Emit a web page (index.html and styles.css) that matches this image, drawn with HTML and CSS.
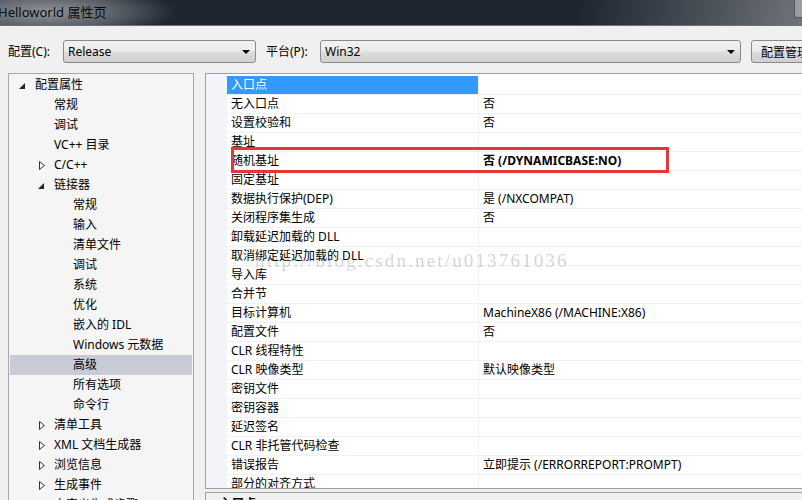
FILE: index.html
```html
<!DOCTYPE html>
<html lang="zh-CN">
<head>
  <meta charset="UTF-8" />
  <title>Helloworld 属性页</title>
  <link rel="stylesheet" href="styles.css">
</head>
<body>

  <!-- Title bar -->
  <div class="titlebar">
    <span class="title">Helloworld 属性页</span>
    <span class="close-edge"></span>
  </div>

  <!-- Konfigurasi / platform -->
  <div class="toolbar">
    <label class="lbl">配置(C):</label>
    <div class="combo combo-config"><span>Release</span><i class="drop"></i></div>
    <label class="lbl lbl-plat">平台(P):</label>
    <div class="combo combo-plat"><span>Win32</span><i class="drop"></i></div>
    <button class="btn">配置管理器(O)...</button>
  </div>

  <div class="main">
    <!-- Tree -->
    <ul class="tree">
      <li class="l0"><i class="tw open"></i>配置属性</li>
      <li class="l1">常规</li>
      <li class="l1">调试</li>
      <li class="l1">VC++ 目录</li>
      <li class="l1"><svg class="tw closed" viewBox="0 0 6 9"><path d="M.5 .5v8l5-4z"/></svg>C/C++</li>
      <li class="l1"><i class="tw open"></i>链接器</li>
      <li class="l2">常规</li>
      <li class="l2">输入</li>
      <li class="l2">清单文件</li>
      <li class="l2">调试</li>
      <li class="l2">系统</li>
      <li class="l2">优化</li>
      <li class="l2">嵌入的 IDL</li>
      <li class="l2">Windows 元数据</li>
      <li class="l2 sel">高级</li>
      <li class="l2">所有选项</li>
      <li class="l2">命令行</li>
      <li class="l1"><svg class="tw closed" viewBox="0 0 6 9"><path d="M.5 .5v8l5-4z"/></svg>清单工具</li>
      <li class="l1"><svg class="tw closed" viewBox="0 0 6 9"><path d="M.5 .5v8l5-4z"/></svg>XML 文档生成器</li>
      <li class="l1"><svg class="tw closed" viewBox="0 0 6 9"><path d="M.5 .5v8l5-4z"/></svg>浏览信息</li>
      <li class="l1"><svg class="tw closed" viewBox="0 0 6 9"><path d="M.5 .5v8l5-4z"/></svg>生成事件</li>
      <li class="l1"><svg class="tw closed" viewBox="0 0 6 9"><path d="M.5 .5v8l5-4z"/></svg>自定义生成步骤</li>
    </ul>

    <div class="right">
      <!-- Property grid -->
      <div class="grid">
        <div class="row active"><div class="name">入口点</div><div class="val"></div></div>
        <div class="row"><div class="name">无入口点</div><div class="val">否</div></div>
        <div class="row"><div class="name">设置校验和</div><div class="val">否</div></div>
        <div class="row"><div class="name">基址</div><div class="val"></div></div>
        <div class="row"><div class="name">随机基址</div><div class="val bold">否 (/DYNAMICBASE:NO)</div></div>
        <div class="row"><div class="name">固定基址</div><div class="val"></div></div>
        <div class="row"><div class="name">数据执行保护(DEP)</div><div class="val">是 (/NXCOMPAT)</div></div>
        <div class="row"><div class="name">关闭程序集生成</div><div class="val">否</div></div>
        <div class="row"><div class="name">卸载延迟加载的 DLL</div><div class="val"></div></div>
        <div class="row"><div class="name">取消绑定延迟加载的 DLL</div><div class="val"></div></div>
        <div class="row"><div class="name">导入库</div><div class="val"></div></div>
        <div class="row"><div class="name">合并节</div><div class="val"></div></div>
        <div class="row"><div class="name">目标计算机</div><div class="val">MachineX86 (/MACHINE:X86)</div></div>
        <div class="row"><div class="name">配置文件</div><div class="val">否</div></div>
        <div class="row"><div class="name">CLR 线程特性</div><div class="val"></div></div>
        <div class="row"><div class="name">CLR 映像类型</div><div class="val">默认映像类型</div></div>
        <div class="row"><div class="name">密钥文件</div><div class="val"></div></div>
        <div class="row"><div class="name">密钥容器</div><div class="val"></div></div>
        <div class="row"><div class="name">延迟签名</div><div class="val"></div></div>
        <div class="row"><div class="name">CLR 非托管代码检查</div><div class="val"></div></div>
        <div class="row"><div class="name">错误报告</div><div class="val">立即提示 (/ERRORREPORT:PROMPT)</div></div>
        <div class="row"><div class="name">部分的对齐方式</div><div class="val"></div></div>

        <!-- overlay: red highlight + watermark -->
        <div class="mark"></div>
        <div class="watermark">http://blog.csdn.net/u013761036</div>
      </div>

      <!-- Description -->
      <div class="desc"><b>入口点</b></div>
    </div>
  </div>

</body>
</html>
```

FILE: styles.css
```css
/* ---------- Dasar ---------- */
html,body{margin:0;height:500px;overflow:hidden}
body{
  background:#f0f0f0;
  font-family:"Segoe UI","Noto Sans","Noto Sans CJK SC",sans-serif;
  font-size:12px;
  color:#000;
}

/* ---------- Title bar ---------- */
.titlebar{
  position:relative;
  height:25px;
  background:
    radial-gradient(ellipse 130px 28px at 45px 12px,rgba(150,154,160,.95),rgba(150,154,160,.5) 55%,rgba(31,38,48,0) 100%),
    linear-gradient(100deg,#1f2630 0%,#1f2630 72%,#4a5058 88%,#70747a 100%);
  border-bottom:1px solid #6e7278;
}
.title{
  position:absolute;left:-2px;top:3px;
  font-size:13px;line-height:18px;color:#0a0a0a;
}
.close-edge{
  position:absolute;right:-6px;top:-2px;
  width:12px;height:18px;
  border:1px solid #50555c;border-radius:3px;
  background:#9a9ea4;
}

/* ---------- Toolbar ---------- */
.toolbar{display:flex;align-items:center;height:23px;margin-top:14px;padding-left:8px;white-space:nowrap}
.toolbar > *{flex:none}
.lbl{width:55px;line-height:23px}
.lbl-plat{width:54px;margin-left:10px}
.combo{
  position:relative;box-sizing:border-box;height:23px;
  border:1px solid #8a8a8a;border-radius:3px;
  background:linear-gradient(#f2f2f2 0%,#ebebeb 48%,#dddddd 52%,#cfcfcf 100%);
  line-height:21px;padding-left:4px;
}
.combo-config{width:193px}
.combo-plat{width:421px}
.drop{
  position:absolute;right:5px;top:9px;
  width:0;height:0;
  border-left:4px solid transparent;border-right:4px solid transparent;border-top:4px solid #000;
}
.btn{
  margin-left:10px;height:23px;padding:0 9px;
  border:1px solid #8a8a8a;border-radius:3px;
  background:linear-gradient(#f2f2f2 0%,#ebebeb 48%,#dddddd 52%,#cfcfcf 100%);
  font:inherit;font-size:12px;text-align:left;
}

/* ---------- Layout ---------- */
.main{display:flex;margin-top:10px;gap:11px;padding-left:8px}

/* ---------- Tree ---------- */
.tree{
  list-style:none;margin:0;padding:1px 0 0;
  width:184px;height:440px;flex:none;
  background:#f5f5f5;border:1px solid #a7a7a7;border-bottom:0;
}
.tree li{position:relative;height:20px;line-height:20px;white-space:nowrap;margin:0 1px}
.l0{padding-left:25px}
.l1{padding-left:44px}
.l2{padding-left:63px}
.tree li.sel{background:#c9cbd7}
.tw{position:absolute;top:7px}
.l0 .tw{left:9px}
.l1 .tw{left:28px}
.tw.open{
  width:0;height:0;top:8px;
  border-left:6px solid transparent;border-bottom:6px solid #262626;
}
.tw.closed{
  width:6px;height:9px;top:6px;left:29px;
  fill:none;stroke:#333;stroke-width:1;
}

/* ---------- Property grid ---------- */
.right{flex:1;display:flex;flex-direction:column;min-width:0}
.grid{
  position:relative;
  height:412px;
  background:#fff;
  border:1px solid #a0a0a0;border-right:0;
  padding-top:2px;
  overflow:hidden;
}
.row{
  display:flex;height:18px;line-height:18px;
  border-bottom:1px solid #f0f1f4;
  margin-left:21px;white-space:nowrap;
}
.grid::before{
  content:"";position:absolute;left:0;top:0;bottom:0;width:21px;background:#f2f4f9;
}
.name{width:247px;padding-left:4px;border-right:1px solid #f0f1f4}
.val{padding-left:4px}
.val.bold{font-weight:bold}
.row.active .name{background:#3399ff;color:#fff}

.mark{
  position:absolute;left:25px;top:73px;
  width:432px;height:20px;
  border:3px solid #e8353a;
}
.watermark{
  position:absolute;left:49px;top:176px;
  font-family:"Liberation Serif",serif;font-size:19px;letter-spacing:2.15px;
  color:rgba(120,120,120,.32);
  white-space:nowrap;pointer-events:none;
}

/* ---------- Deskripsi ---------- */
.desc{
  margin-top:3px;height:40px;
  background:#f0f0f0;border:1px solid #a0a0a0;border-right:0;
  padding:2px 0 0 14px;line-height:18px;
}
```
